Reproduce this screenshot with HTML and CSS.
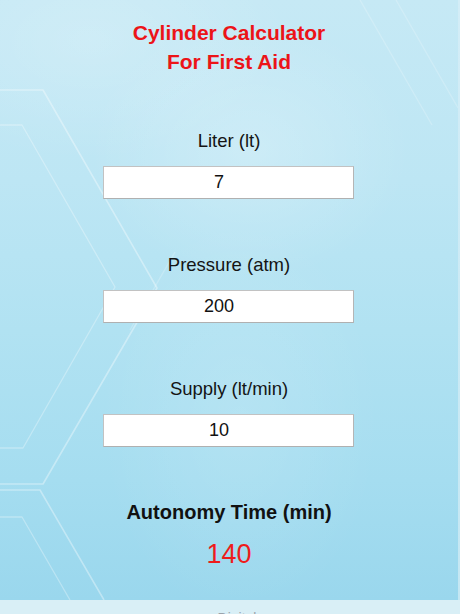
FILE: index.html
```html
<!DOCTYPE html>
<html lang="en">
<head>
<meta charset="utf-8">
<title>Cylinder Calculator For First Aid</title>
<link rel="stylesheet" href="styles.css">
</head>
<body>
<div class="page">
  <main class="calc">
    <svg class="hex-bg" viewBox="0 0 458 600" preserveAspectRatio="none" aria-hidden="true">
      <g fill="none" stroke="#ffffff" stroke-linejoin="round">
        <polyline class="hl" points="-10,90 43,90 157,288 43,484 -10,484"/>
        <polyline class="hl thin" points="-10,125 22,125 115,287 23,448 -10,448"/>
        <polyline class="hl" points="-10,490 40,490 104,600"/>
        <polyline class="hl thin" points="-10,517 22,517 70,600"/>
        <polyline class="hl faint" points="360,0 432,125"/>
        <polyline class="hl faint" points="396,0 458,108"/>
        <polyline class="hl faint" points="130,330 175,252"/>
      </g>
    </svg>

    <h1 class="title">Cylinder Calculator<br>For First Aid</h1>

    <div class="field">
      <label class="field-label" for="liter">Liter (lt)</label>
      <input class="field-input" id="liter" type="text" value="7">
    </div>

    <div class="field">
      <label class="field-label" for="pressure">Pressure (atm)</label>
      <input class="field-input" id="pressure" type="text" value="200">
    </div>

    <div class="field">
      <label class="field-label" for="supply">Supply (lt/min)</label>
      <input class="field-input" id="supply" type="text" value="10">
    </div>

    <div class="result">
      <div class="result-label">Autonomy Time (min)</div>
      <div class="result-value">140</div>
    </div>
  </main>
  <div class="edge"></div>
</div>
<footer class="footer">Digital</footer>
</body>
</html>
```

FILE: styles.css
```css
html {
  overflow: hidden;
}

body {
  margin: 0;
  width: 460px;
  font-family: "Liberation Sans", Arial, sans-serif;
  color: #111;
  background: #d9eff6;
}

.page {
  display: flex;
  height: 600px;
}

.calc {
  position: relative;
  isolation: isolate;
  width: 458px;
  height: 600px;
  box-sizing: border-box;
  padding-top: 19px;
  display: flex;
  flex-direction: column;
  align-items: center;
  overflow: hidden;
  background:
    radial-gradient(ellipse 160px 130px at 250px 150px, rgba(255,255,255,0.22), rgba(255,255,255,0) 100%),
    radial-gradient(ellipse 200px 120px at 90px 40px, rgba(255,255,255,0.18), rgba(255,255,255,0) 100%),
    radial-gradient(ellipse 140px 200px at 240px 420px, rgba(255,255,255,0.12), rgba(255,255,255,0) 100%),
    linear-gradient(180deg, #c6e9f5 0%, #bde6f4 30%, #b1e2f2 55%, #a5ddf0 80%, #9ad7ed 100%);
}

.hex-bg {
  position: absolute;
  left: 0;
  top: 0;
  width: 458px;
  height: 600px;
  z-index: -1;
}

.hl {
  stroke-width: 1.6;
  stroke-opacity: 0.36;
}

.hl.thin {
  stroke-width: 1.3;
  stroke-opacity: 0.3;
}

.hl.faint {
  stroke-width: 1.4;
  stroke-opacity: 0.2;
}

.edge {
  width: 2px;
  height: 600px;
  background: linear-gradient(180deg, #d3edf7, #c4e7f3);
}

.title {
  margin: 0;
  font-size: 21px;
  line-height: 28.5px;
  font-weight: bold;
  color: #ec1418;
  text-align: center;
}

.field {
  display: flex;
  flex-direction: column;
  align-items: center;
  margin-top: 52.5px;
}

.field + .field {
  margin-top: 53.5px;
}

.field-label {
  font-size: 18.5px;
  line-height: 24px;
  color: #141414;
}

.field-input {
  box-sizing: border-box;
  width: 251px;
  height: 33px;
  margin: 13.5px 0 0 -1px;
  padding: 0 19px 0 0;
  border: 1px solid #c2c2c2;
  border-right-color: #b5b5b5;
  border-bottom-color: #b0b0b0;
  background: #ffffff;
  font-family: "Liberation Sans", Arial, sans-serif;
  font-size: 18px;
  color: #111;
  text-align: center;
  outline: none;
}

.result {
  display: flex;
  flex-direction: column;
  align-items: center;
  margin-top: 51.5px;
}

.result-label {
  font-size: 20px;
  line-height: 26px;
  font-weight: bold;
  color: #111;
}

.result-value {
  margin-top: 12px;
  font-size: 27px;
  line-height: 34px;
  color: #ee1c1c;
}

.footer {
  height: 40px;
  box-sizing: border-box;
  padding-top: 10px;
  padding-left: 14px;
  text-align: center;
  font-size: 14px;
  line-height: 16px;
  color: #9aa3ab;
}
```
